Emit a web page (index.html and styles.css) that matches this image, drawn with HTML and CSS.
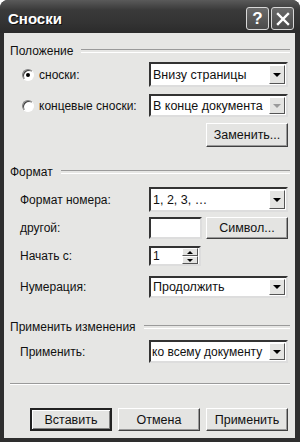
FILE: index.html
```html
<!DOCTYPE html>
<html lang="ru">
<head>
    <meta charset="UTF-8">
    <title>Сноски</title>
    <link rel="stylesheet" href="styles.css">
</head>
<body>
    <div class="window">
        <div class="titlebar">
            <span class="title">Сноски</span>
            <div class="caption">
                <span class="cap-btn">?</span>
                <span class="cap-btn cap-close">
                    <svg width="14" height="14" viewBox="0 0 14 14"><path d="M2 2 L12 12 M12 2 L2 12" stroke="#fff" stroke-width="2.4" stroke-linecap="square"/></svg>
                </span>
            </div>
        </div>

        <div class="content">
            <!-- Положение -->
            <div class="group-title">Положение</div>

            <div class="row row-first">
                <label class="radio-label"><span class="radio checked"></span>сноски:</label>
                <div class="select">Внизу страницы<span class="arrow"></span></div>
            </div>
            <div class="row row-second">
                <label class="radio-label"><span class="radio"></span>концевые сноски:</label>
                <div class="select select-disabled">В конце документа<span class="arrow"></span></div>
            </div>
            <div class="row row-btn">
                <span></span>
                <div class="btn-end"><button class="btn">Заменить...</button></div>
            </div>

            <!-- Формат -->
            <div class="group-title group-format">Формат</div>

            <div class="row row-num">
                <span class="label">Формат номера:</span>
                <div class="select">1, 2, 3, …<span class="arrow"></span></div>
            </div>
            <div class="row row-other">
                <span class="label">другой:</span>
                <div class="pair">
                    <div class="input"></div>
                    <button class="btn btn-symbol">Символ...</button>
                </div>
            </div>
            <div class="row row-start">
                <span class="label">Начать с:</span>
                <div class="spin">
                    <span class="spin-value">1</span>
                    <span class="spin-btns">
                        <span class="spin-btn"><span class="tri-up"></span></span>
                        <span class="spin-btn"><span class="tri-down"></span></span>
                    </span>
                </div>
            </div>
            <div class="row row-numbering">
                <span class="label">Нумерация:</span>
                <div class="select">Продолжить<span class="arrow"></span></div>
            </div>

            <!-- Применить изменения -->
            <div class="group-title group-apply">Применить изменения</div>

            <div class="row row-apply">
                <span class="label">Применить:</span>
                <div class="select select-tight">ко всему документу<span class="arrow"></span></div>
            </div>

            <div class="separator"></div>

            <div class="footer">
                <button class="btn btn-default">Вставить</button>
                <button class="btn">Отмена</button>
                <button class="btn">Применить</button>
            </div>
        </div>
    </div>
</body>
</html>
```

FILE: styles.css
```css
* {
    box-sizing: border-box;
    margin: 0;
    padding: 0;
}

body {
    width: 300px;
    height: 442px;
    background: #fff;
    font-family: 'Liberation Sans', Arial, sans-serif;
    font-size: 12px;
    color: #111;
    overflow: hidden;
}

.window {
    width: 300px;
    height: 442px;
    display: flex;
    flex-direction: column;
    background: #2e2e2e;
    border-radius: 8px 8px 0 0;
    padding: 0 5px 4px 4px;
}

.titlebar {
    height: 33px;
    display: flex;
    align-items: center;
    justify-content: space-between;
    margin: 0 -5px 0 -4px;
    padding: 0 6px 0 8px;
    border-radius: 8px 8px 0 0;
    background: linear-gradient(#5a5a5a, #3a3a3a 30%, #333 70%, #2b2b2b);
}

.title {
    color: #fff;
    font-weight: bold;
    font-size: 15px;
    text-shadow: 1px 1px 0 #111;
    margin-top: 4px;
}

.caption {
    display: flex;
    gap: 2px;
    margin-top: 4px;
}

.cap-btn {
    width: 23px;
    height: 23px;
    border: 1px solid #d8d8d8;
    border-radius: 3px;
    background: linear-gradient(#6a6a6a, #4a4a4a);
    color: #fff;
    font-weight: bold;
    font-size: 17px;
    display: flex;
    align-items: center;
    justify-content: center;
}

.content {
    flex: 1;
    background: #e6e6e4;
    padding: 0 7px 0 6px;
    display: flex;
    flex-direction: column;
}

.group-title {
    display: flex;
    align-items: center;
    gap: 8px;
    height: 14px;
    margin-top: 11px;
}

.group-title::after {
    content: '';
    flex: 1;
    height: 2px;
    border-top: 1px solid #9a9a9a;
    border-bottom: 1px solid #fff;
    margin-right: -2px;
}

.group-format { margin-top: 18px; }
.group-apply { margin-top: 22px; }

.row {
    display: grid;
    grid-template-columns: 139px 1fr;
    align-items: center;
}

.label {
    padding-left: 10px;
}

.row-first { margin-top: 4px; }
.row-second { margin-top: 7px; }
.row-btn { margin-top: 6px; }
.row-num { margin-top: 8px; }
.row-other { margin-top: 5px; }
.row-start { margin-top: 7px; }
.row-numbering { margin-top: 10px; }
.row-apply { margin-top: 6px; }

.radio-label {
    display: flex;
    align-items: center;
    gap: 5px;
    padding-left: 12px;
}

.radio {
    width: 12px;
    height: 12px;
    border-radius: 50%;
    background: #fff;
    border: 1px solid #808080;
    border-right-color: #fff;
    border-bottom-color: #fff;
    box-shadow: inset 1px 1px 0 #404040;
    position: relative;
}

.radio.checked::after {
    content: '';
    position: absolute;
    left: 3px;
    top: 3px;
    width: 4px;
    height: 4px;
    border-radius: 50%;
    background: #000;
}

.select {
    height: 25px;
    background: #fff;
    border: 2px solid #333;
    border-right-color: #ddd;
    border-bottom-color: #ddd;
    display: flex;
    align-items: center;
    justify-content: space-between;
    padding: 0 1px 0 2px;
    white-space: nowrap;
    font-size: 12.5px;
}

.row-second .select { height: 23px; }
.row-numbering .select { height: 22px; }
.row-apply .select { height: 23px; }

.select-tight {
    padding-left: 1px;
    font-size: 12px;
}

.arrow {
    width: 16px;
    height: calc(100% - 2px);
    background: #e4e4e2;
    border: 1px solid;
    border-color: #fff #555 #555 #fff;
    display: flex;
    align-items: center;
    justify-content: center;
    flex-shrink: 0;
}

.arrow::after {
    content: '';
    border-left: 4px solid transparent;
    border-right: 4px solid transparent;
    border-top: 4px solid #000;
}

.select-disabled .arrow::after {
    border-top-color: #9a9a9a;
}

.btn-end {
    display: flex;
    justify-content: flex-end;
}

.btn {
    width: 82px;
    height: 24px;
    background: #e4e4e2;
    border: 1px solid;
    border-color: #fff #404040 #404040 #fff;
    box-shadow: inset -1px -1px 0 #9a9a9a;
    font-family: 'Liberation Sans', Arial, sans-serif;
    font-size: 12.5px;
    color: #111;
}

.pair {
    display: flex;
    justify-content: space-between;
}

.input {
    width: 53px;
    height: 22px;
    background: #fff;
    border: 2px solid #333;
    border-right-color: #ddd;
    border-bottom-color: #ddd;
}

.btn-symbol {
    height: 22px;
}

.spin {
    width: 52px;
    height: 20px;
    background: #fff;
    border: 2px solid #333;
    border-right-color: #ddd;
    border-bottom-color: #ddd;
    display: flex;
    justify-content: space-between;
    padding: 0 1px 0 2px;
}

.spin-value {
    display: flex;
    align-items: center;
}

.spin-btns {
    display: flex;
    flex-direction: column;
    width: 16px;
}

.spin-btn {
    flex: 1;
    background: #e4e4e2;
    border: 1px solid;
    border-color: #fff #555 #555 #fff;
    display: flex;
    align-items: center;
    justify-content: center;
}

.tri-up {
    border-left: 3px solid transparent;
    border-right: 3px solid transparent;
    border-bottom: 3px solid #000;
}

.tri-down {
    border-left: 3px solid transparent;
    border-right: 3px solid transparent;
    border-top: 3px solid #000;
}

.separator {
    margin-top: 20px;
    height: 2px;
    border-top: 1px solid #9a9a9a;
    border-bottom: 1px solid #fff;
    margin-right: -2px;
}

.footer {
    margin-top: 23px;
    display: flex;
    justify-content: flex-end;
    gap: 6px;
}

.footer .btn {
    height: 23px;
}

.btn-default {
    border: 2px solid #222;
    box-shadow: inset 1px 1px 0 #fff, inset -1px -1px 0 #808080;
}
```
